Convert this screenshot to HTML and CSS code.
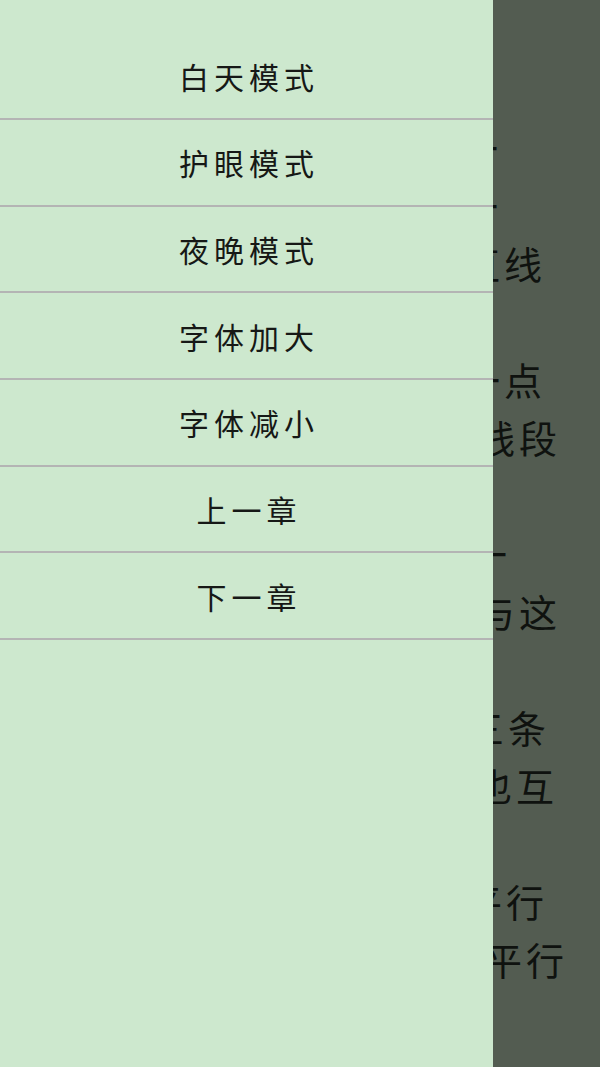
FILE: index.html
```html
<!DOCTYPE html>
<html lang="zh-CN">
<head>
<meta charset="utf-8">
<title>阅读</title>
<link rel="stylesheet" href="styles.css">
</head>
<body>
<div class="reader">
  <div class="line e502">的位置一</div>
  <div class="line e502">平行相交一</div>
  <div class="line e546">的直线</div>
  <div class="line blank">&nbsp;</div>
  <div class="line e546">外一点</div>
  <div class="line e561">叫线段</div>
  <div class="line blank">&nbsp;</div>
  <div class="line e511">只有一</div>
  <div class="line e561">平行与这</div>
  <div class="line blank">&nbsp;</div>
  <div class="line e550">第三条</div>
  <div class="line e558">直线也互</div>
  <div class="line blank">&nbsp;</div>
  <div class="line e548">线平行</div>
  <div class="line e568">记作平行</div>
</div>

<nav class="drawer">
  <ul class="menu">
    <li class="item">白天模式</li>
    <li class="item">护眼模式</li>
    <li class="item">夜晚模式</li>
    <li class="item">字体加大</li>
    <li class="item">字体减小</li>
    <li class="item">上一章</li>
    <li class="item">下一章</li>
  </ul>
</nav>
</body>
</html>
```
FILE: styles.css
```css
html, body {
  margin: 0;
  padding: 0;
  width: 600px;
  height: 1067px;
  overflow: hidden;
}
body {
  position: relative;
  background: #535c51;
  font-family: "Noto Sans CJK SC", "Noto Sans", sans-serif;
}
.reader {
  padding-top: 118px;
  color: #0f120f;
  font-size: 38px;
  letter-spacing: 4px;
  line-height: 58px;
}
.line {
  height: 58px;
  text-align: right;
  white-space: nowrap;
}
.e502 { width: 502px; }
.e511 { width: 511px; }
.e546 { width: 546px; }
.e548 { width: 548px; }
.e550 { width: 550px; }
.e558 { width: 558px; }
.e561 { width: 561px; }
.e568 { width: 568px; }

.drawer {
  position: absolute;
  top: 0;
  left: 0;
  width: 493px;
  height: 1067px;
  background: #cde8ce;
}
.menu {
  list-style: none;
  margin: 0;
  padding: 33.33px 0 0 0;
}
.item {
  box-sizing: border-box;
  height: 86.67px;
  border-bottom: 2px solid #b4b4b4;
  display: flex;
  align-items: center;
  justify-content: center;
  font-size: 30px;
  letter-spacing: 5px;
  padding-left: 5px;
  color: #161816;
}
```
